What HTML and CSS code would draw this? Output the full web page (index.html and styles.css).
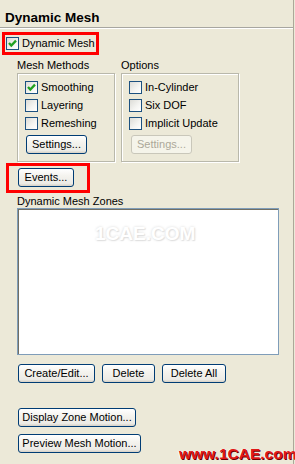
FILE: index.html
```html
<!DOCTYPE html>
<html>
<head>
<meta charset="utf-8">
<link rel="stylesheet" href="styles.css">
</head>
<body>
<div class="panel">
  <div class="title">Dynamic Mesh</div>
  <div class="hl">
    <span class="cb"><svg viewBox="0 0 11 11" width="11" height="11"><polyline points="2,5 4.3,7.6 9,2.6" fill="none" stroke="#21a121" stroke-width="2.3"/></svg></span>
    <span class="cbtext">Dynamic Mesh</span>
  </div>
  <div class="groups">
    <div class="group g1">
      <div class="glabel">Mesh Methods</div>
      <div class="gbox">
        <div class="row"><span class="cb"><svg viewBox="0 0 11 11" width="11" height="11"><polyline points="2,5 4.3,7.6 9,2.6" fill="none" stroke="#21a121" stroke-width="2.3"/></svg></span><span class="cbtext">Smoothing</span></div>
        <div class="row"><span class="cb"></span><span class="cbtext">Layering</span></div>
        <div class="row"><span class="cb"></span><span class="cbtext">Remeshing</span></div>
        <button class="btn gbtn s1">Settings...</button>
      </div>
    </div>
    <div class="group g2">
      <div class="glabel">Options</div>
      <div class="gbox">
        <div class="row"><span class="cb"></span><span class="cbtext">In-Cylinder</span></div>
        <div class="row"><span class="cb"></span><span class="cbtext">Six DOF</span></div>
        <div class="row"><span class="cb"></span><span class="cbtext">Implicit Update</span></div>
        <button class="btn gbtn s2 disabled">Settings...</button>
      </div>
    </div>
  </div>
  <div class="hl2"><button class="btn events">Events...</button></div>
  <div class="zlabel">Dynamic Mesh Zones</div>
  <div class="list"><span class="wm-faint">1CAE.COM</span></div>
  <div class="btnrow">
    <button class="btn b-create">Create/Edit...</button>
    <button class="btn b-delete">Delete</button>
    <button class="btn b-delall">Delete All</button>
  </div>
  <button class="btn b-display">Display Zone Motion...</button>
  <button class="btn b-preview">Preview Mesh Motion...</button>
  <div class="wm">www.1CAE.com</div>
</div>
</body>
</html>
```
FILE: styles.css
```css
html, body {
  margin: 0;
  padding: 0;
  background: #ece9d8;
}
body {
  width: 295px;
  height: 464px;
  overflow: hidden;
  font-family: "Liberation Sans", Arial, sans-serif;
  font-size: 11px;
  color: #000;
}
.panel {
  position: relative;
  width: 293px;
  height: 464px;
  border-right: 1px solid #aca899;
  display: flex;
  flex-direction: column;
  align-items: flex-start;
}
.title {
  box-sizing: border-box;
  width: 293px;
  height: 28px;
  padding: 10px 0 0 5px;
  font-weight: bold;
  font-size: 13.5px;
  line-height: 16px;
  border-bottom: 1px solid #a7a6a0;
  box-shadow: 0 1px 0 #fff;
}
.hl {
  box-sizing: border-box;
  margin: 4px 0 0 2px;
  width: 97px;
  height: 23px;
  border: 3px solid #f00;
  padding-left: 1px;
  display: flex;
  align-items: center;
}
.cb {
  box-sizing: border-box;
  width: 13px;
  height: 13px;
  flex: none;
  border: 1px solid #1c5180;
  background: linear-gradient(135deg, #dcdcd7 0%, #f5f5f2 60%, #fff 100%);
  display: flex;
  align-items: center;
  justify-content: center;
}
.cb svg { display: block; }
.cbtext {
  margin-left: 3px;
  line-height: 13px;
  white-space: nowrap;
}
.groups {
  display: flex;
  gap: 6px;
  margin: 4px 0 0 17px;
}
.glabel {
  line-height: 13px;
  height: 13px;
  white-space: nowrap;
}
.gbox {
  box-sizing: border-box;
  margin-top: 1px;
  height: 89px;
  border: 1px solid #b9b8ab;
  box-shadow: inset 1px 1px 0 #fff, 1px 1px 0 #fff;
  padding: 5px 0 0 7px;
  display: flex;
  flex-direction: column;
  align-items: flex-start;
}
.g1 .gbox { width: 98px; }
.g2 .gbox { width: 118px; }
.row {
  height: 18px;
  display: flex;
  align-items: flex-start;
}
.row .cb { margin-top: 2px; }
.row .cbtext { margin-top: 2px; }
.btn {
  box-sizing: border-box;
  height: 19px;
  padding: 0;
  margin: 0;
  font-family: "Liberation Sans", Arial, sans-serif;
  font-size: 11px;
  line-height: 17px;
  color: #000;
  border: 1px solid #003c74;
  border-radius: 3px;
  background: linear-gradient(#ffffff 0%, #f4f3ee 40%, #ecebe6 85%, #d6d0c5 100%);
  text-align: center;
  white-space: nowrap;
}
.gbtn { margin-top: 2px; }
.s1 { width: 61px; margin-left: 1px; }
.s2 { width: 61px; margin-left: 2px; }
.btn.disabled {
  border-color: #c9c7ba;
  color: #aca899;
  background: #f5f4ea;
}
.hl2 {
  box-sizing: border-box;
  margin: 1px 0 0 6px;
  width: 84px;
  height: 30px;
  border: 3px solid #f00;
  padding: 2px 0 0 9px;
}
.events { width: 56px; }
.zlabel {
  margin: 2px 0 0 17px;
  line-height: 13px;
}
.list {
  position: relative;
  box-sizing: border-box;
  margin: 0 0 0 17px;
  width: 262px;
  height: 147px;
  background: #fff;
  border: 1px solid #7f9db9;
  box-shadow: inset 1px 1px 0 #716f64;
}
.wm-faint {
  position: absolute;
  left: 77px;
  top: 14px;
  font-family: "Liberation Sans", Arial, sans-serif;
  font-weight: bold;
  font-size: 19px;
  color: #fff;
  text-shadow: 0 0 3px #d8d8d8, 1px 1px 1px #e4e4e4;
}
.btnrow {
  display: flex;
  gap: 7px;
  margin: 9px 0 0 18px;
}
.b-create { width: 77px; }
.b-delete { width: 53px; }
.b-delall { width: 64px; }
.b-display { width: 118px; margin: 25px 0 0 18px; }
.b-preview { width: 123px; margin: 7px 0 0 18px; }
.wm {
  position: absolute;
  left: 179px;
  top: 446px;
  font-family: "Liberation Sans", Arial, sans-serif;
  font-weight: bold;
  font-size: 15.5px;
  line-height: 16px;
  color: #e01818;
  text-shadow: 1px 1px 0 #6a0000, -1px 0 0 #ffffff;
}
```
